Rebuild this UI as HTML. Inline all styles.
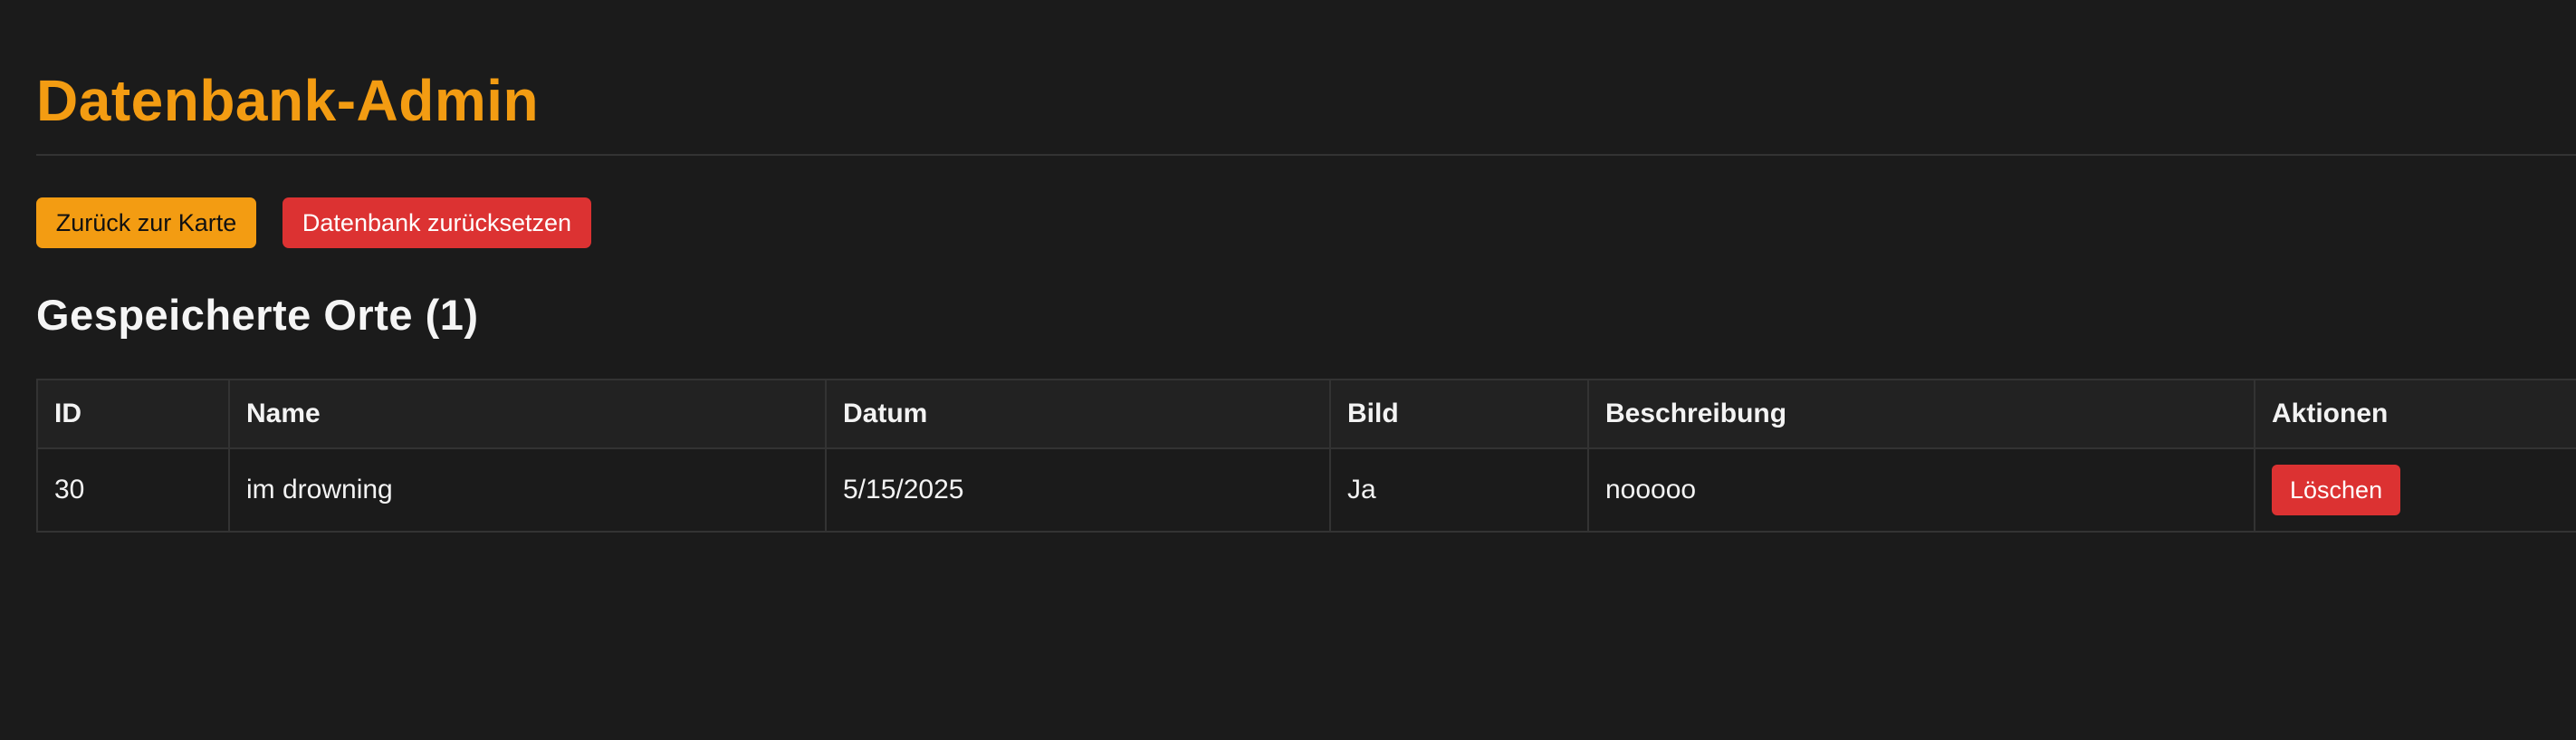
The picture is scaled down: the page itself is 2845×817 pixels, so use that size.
<!DOCTYPE html>
<html><head><meta charset="utf-8"><style>
body{margin:0;width:2845px;height:817px;background:#1b1b1b;font-family:"Liberation Sans",sans-serif;color:#f3f3f3;overflow:hidden;position:relative}
h1{position:absolute;left:40px;top:74px;margin:0;font-size:64px;color:#f39c12;font-weight:bold;letter-spacing:0.5px}
.hr{position:absolute;left:40px;top:170px;width:2805px;height:2px;background:#333}
.btn{position:absolute;top:218px;height:56px;border-radius:7px;font-size:27px;line-height:56px;text-align:center}
h2{position:absolute;left:40px;top:320px;margin:0;font-size:47px;font-weight:bold;color:#f5f5f5;letter-spacing:0.5px}
table{position:absolute;left:40px;top:418px;border-collapse:collapse;width:2860px;font-size:30px;table-layout:fixed}
td,th{border:2px solid #333;text-align:left;padding:0 18px}
th{background:#222;height:74px;font-weight:bold}
td{height:90px}
</style></head><body>
<h1>Datenbank-Admin</h1>
<div class="hr"></div>
<div class="btn" style="left:40px;width:243px;background:#f39c12;color:#111">Zurück zur Karte</div>
<div class="btn" style="left:312px;width:341px;background:#dc3232;color:#fff">Datenbank zurücksetzen</div>
<h2>Gespeicherte Orte (1)</h2>
<table><colgroup><col style="width:212px"><col style="width:659px"><col style="width:557px"><col style="width:285px"><col style="width:736px"><col></colgroup>
<tr><th>ID</th><th>Name</th><th>Datum</th><th>Bild</th><th>Beschreibung</th><th>Aktionen</th></tr>
<tr><td>30</td><td>im drowning</td><td>5/15/2025</td><td>Ja</td><td>nooooo</td><td><span style="display:inline-block;background:#dc3232;color:#fff;border-radius:6px;padding:0 20px;height:56px;line-height:56px;font-size:27px">Löschen</span></td></tr></table>
</body></html>
